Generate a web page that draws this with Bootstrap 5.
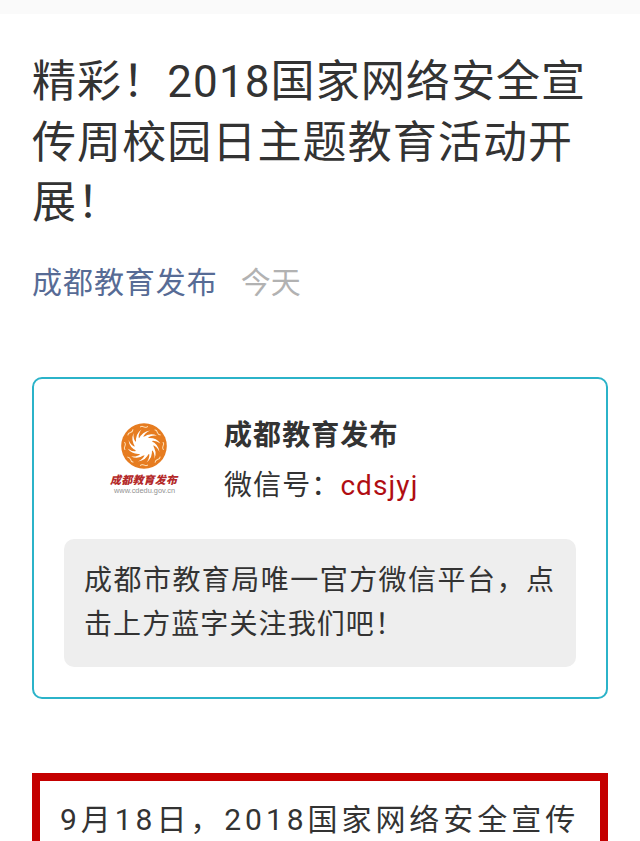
<!DOCTYPE html>
<html lang="zh-CN">
<head>
<meta charset="utf-8">
<meta name="viewport" content="width=device-width, initial-scale=1">
<title>成都教育发布</title>
<link href="https://cdn.jsdelivr.net/npm/bootstrap@5.3.0/dist/css/bootstrap.min.css" rel="stylesheet">
<style>
body { font-family: Roboto, "Noto Sans CJK SC", sans-serif; color: #333; letter-spacing: 1.09px; }
.page-view { height: 841px; }
.top-strip { height: 14px; background: #fafafa; }
.article { padding: 38px 32px 0; }
.article-title { font-size: 44px; line-height: 60.5px; margin-bottom: 27.5px; color: #333; }
.article-meta { font-size: 30px; line-height: 44px; gap: 23px; margin-bottom: 72px; letter-spacing: .95px; }
.author { color: #576b95; }
.date { color: #b2b2b2; letter-spacing: 0; }
.profile { border: 2px solid #2bb3c9; border-radius: 10px; height: 322px; padding: 30px; margin-bottom: 74px; font-size: 28px; }
.profile-head { height: 130px; padding-left: 40px; }
.logo { width: 88px; height: 100px; margin-top: 4px; }
.profile-text { margin-left: 32px; line-height: 50px; padding-top: 2px; }
.wechat-id { color: #b00d12; }
.intro { background: #eee; border-radius: 10px; padding: 20px 21px 16px 20px; height: 128px; line-height: 44.4px; text-align: justify; }
.story { border: 8px solid #c40000; border-bottom: 0; padding: 14px 20px; height: 120px; font-size: 30px; line-height: 50px; letter-spacing: 3.95px; }
</style>
</head>
<body class="bg-white">
<div class="page-view overflow-hidden">
  <div class="top-strip"></div>
  <main class="article">
    <h1 class="article-title fw-normal">精彩！2018国家网络安全宣传周校园日主题教育活动开展！</h1>
    <div class="article-meta d-flex">
      <a class="author text-decoration-none" href="#">成都教育发布</a>
      <span class="date">今天</span>
    </div>
    <section class="profile">
      <div class="profile-head d-flex">
        <svg class="logo flex-shrink-0" viewBox="0 0 88 100" role="img" aria-label="成都教育发布">
          <defs>
            <path id="ray" d="M-5-7Q-2-14.500 6-15.500Q0-13 -1-8Z"/>
            <path id="leaf" d="M-4-19Q-2-20.500 0-19Q2-18 4-19.500"/>
          </defs>
          <g transform="translate(40 33)">
            <circle r="22.8" fill="#e67c20"/>
            <circle r="9.500" fill="#fff"/>
            <g fill="#fff">
              <use href="#ray"/><use href="#ray" transform="rotate(30)"/><use href="#ray" transform="rotate(60)"/><use href="#ray" transform="rotate(90)"/><use href="#ray" transform="rotate(120)"/><use href="#ray" transform="rotate(150)"/><use href="#ray" transform="rotate(180)"/><use href="#ray" transform="rotate(210)"/><use href="#ray" transform="rotate(240)"/><use href="#ray" transform="rotate(270)"/><use href="#ray" transform="rotate(300)"/><use href="#ray" transform="rotate(330)"/>
            </g>
            <g fill="none" stroke="#ffe0b8" stroke-width="1">
              <use href="#leaf"/><use href="#leaf" transform="rotate(45)"/><use href="#leaf" transform="rotate(90)"/><use href="#leaf" transform="rotate(135)"/><use href="#leaf" transform="rotate(180)"/><use href="#leaf" transform="rotate(225)"/><use href="#leaf" transform="rotate(270)"/><use href="#leaf" transform="rotate(315)"/>
            </g>
          </g>
          <text x="6" y="71" font-size="11" font-weight="900" font-style="italic" letter-spacing="0" textLength="67" fill="#b42a2a" font-family="Noto Sans CJK SC, sans-serif">成都教育发布</text>
          <text x="10" y="79.500" font-size="6.5" letter-spacing="0" textLength="61" lengthAdjust="spacingAndGlyphs" fill="#929292" font-family="Liberation Sans, sans-serif">www.cdedu.gov.cn</text>
        </svg>
        <div class="profile-text text-nowrap">
          <div class="fw-bold">成都教育发布</div>
          <div>微信号：<span class="wechat-id">cdsjyj</span></div>
        </div>
      </div>
      <div class="intro">成都市教育局唯一官方微信平台，点击上方蓝字关注我们吧！</div>
    </section>
    <section class="story text-nowrap">9月18日，2018国家网络安全宣传</section>
  </main>
</div>
<script src="https://cdn.jsdelivr.net/npm/bootstrap@5.3.0/dist/js/bootstrap.bundle.min.js"></script>
</body>
</html>
